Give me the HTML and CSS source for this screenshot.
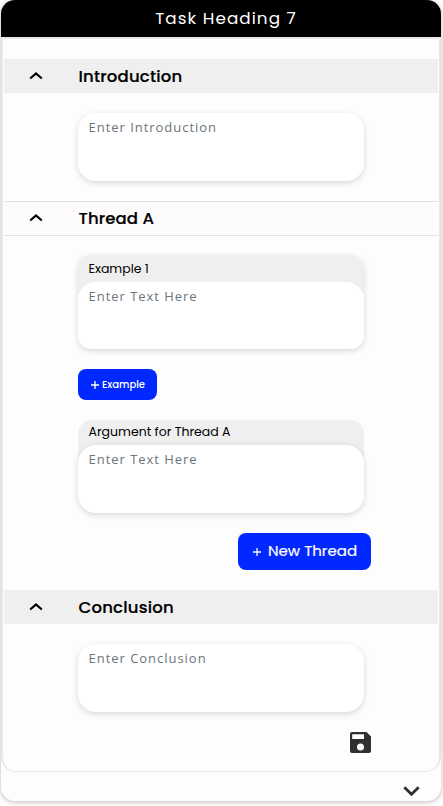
FILE: index.html
```html
<!DOCTYPE html>
<html lang="en">
<head>
<meta charset="utf-8">
<title>Task Heading 7</title>
<link rel="stylesheet" href="styles.css">
</head>
<body>
<main class="card">
  <header class="card-header"><h1 class="card-title">Task Heading 7</h1></header>
  <div class="panel">
    <div class="section-bar">
      <svg class="chevron" viewBox="0 0 14 8"><path d="M1.200 6.500 7 1.500l5.800 5"/></svg>
      <h2 class="section-title intro">Introduction</h2>
    </div>
    <div class="field"><span class="hint">Enter Introduction</span></div>
    <div class="section-bar thread">
      <svg class="chevron" viewBox="0 0 14 8"><path d="M1.200 6.500 7 1.500l5.800 5"/></svg>
      <h2 class="section-title thread-title">Thread A</h2>
    </div>
    <div class="group example">
      <div class="label">Example 1</div>
      <div class="field nested"><span class="hint">Enter Text Here</span></div>
    </div>
    <button class="btn btn-small"><svg class="plus" viewBox="0 0 8 8"><path d="M4 0v8M0 4h8"/></svg><span>Example</span></button>
    <div class="group argument">
      <div class="label">Argument for Thread A</div>
      <div class="field nested"><span class="hint">Enter Text Here</span></div>
    </div>
    <button class="btn btn-large"><svg class="plus" viewBox="0 0 8 8"><path d="M4 0v8M0 4h8"/></svg><span>New Thread</span></button>
    <div class="section-bar">
      <svg class="chevron" viewBox="0 0 14 8"><path d="M1.200 6.500 7 1.500l5.800 5"/></svg>
      <h2 class="section-title conclusion">Conclusion</h2>
    </div>
    <div class="field"><span class="hint">Enter Conclusion</span></div>
    <svg class="save" viewBox="0 0 21 21"><path fill-rule="evenodd" d="M2 0h14.500L21 4.500V19a2 2 0 0 1-2 2H2a2 2 0 0 1-2-2V2a2 2 0 0 1 2-2ZM2.200 2.300v4.600H14V2.300ZM10.500 11.600a3.500 3.500 0 1 0 0 7 3.500 3.500 0 0 0 0-7Z"/></svg>
  </div>
  <footer class="card-footer">
    <svg class="expand" viewBox="0 0 17 10"><path d="m1.300 1.300 7.200 7 7.200-7"/></svg>
  </footer>
</main>
</body>
</html>
```

FILE: styles.css
```css
* {
  box-sizing: border-box;
}

body {
  margin: 0;
  height: 806px;
  padding-left: 1px;
  overflow: hidden;
  background: #fff;
  font-family: Poppins, Inter, sans-serif;
  color: #000;
}

h1,
h2 {
  margin: 0;
}

svg {
  display: block;
  flex: none;
}

.card {
  display: flex;
  flex-direction: column;
  width: 440px;
  height: 801px;
  border-radius: 14px;
  background: #fdfdfd;
  box-shadow: 0 1px 4px 1px rgba(0, 0, 0, 0.2);
  overflow: hidden;
}

.card-header {
  flex: none;
  height: 37px;
  padding-left: 10px;
  background: #000;
  text-align: center;
}

.card-title {
  color: #fff;
  font-size: 16.800px;
  font-weight: 400;
  line-height: 37px;
  letter-spacing: 1.050px;
}

.panel {
  display: flex;
  flex: none;
  flex-direction: column;
  height: 735px;
  padding: 20px 1px 0;
  border: 1px solid #e8e8e8;
  border-width: 2px 2px 1px;
  border-radius: 0 0 15px 15px;
  background: #fdfdfd;
}

.section-bar {
  display: flex;
  flex: none;
  align-items: center;
  gap: 35.500px;
  height: 34px;
  padding-left: 25px;
  background: #efefef;
}

.section-bar.thread {
  height: 35px;
  margin-top: 20px;
  border: solid #e2e2e2;
  border-width: 1px 0;
  background: #fdfbfc;
}

.chevron {
  width: 14px;
  height: 8px;
  margin-bottom: 1px;
  fill: none;
  stroke: #000;
  stroke-width: 2.200;
}

.section-title {
  padding-top: 1px;
  font-size: 16.500px;
  font-weight: 500;
  line-height: 33px;
  white-space: nowrap;
  -webkit-text-stroke: 0.200px #000;
}

.thread-title {
  padding-top: 0;
  letter-spacing: 0.100px;
}

.intro,
.conclusion {
  letter-spacing: 0.200px;
}

.field {
  flex: none;
  width: 286px;
  height: 68px;
  margin: 20px 0 0 74px;
  padding: 5px 10.500px;
  border-radius: 18px;
  background: #fff;
  box-shadow: 0 2px 6px rgba(0, 0, 0, 0.15);
}

.hint {
  display: block;
  color: #6c757d;
  font: 13px/18px "Open Sans", sans-serif;
  letter-spacing: 0.970px;
  white-space: nowrap;
}

.group {
  flex: none;
  width: 286px;
  margin-left: 74px;
  border-radius: 14px 14px 18px 18px;
  background: linear-gradient(#efefef 39px, transparent 39px);
}

.group .field {
  margin: 0;
}

.example {
  height: 94px;
  margin-top: 19px;
  border-radius: 14px;
  box-shadow: 0 2px 6px rgba(0, 0, 0, 0.15);
}

.example .field {
  height: 67px;
  border-radius: 18px 18px 14px 14px;
  box-shadow: none;
}

.label {
  height: 27px;
  padding-left: 10.500px;
  font-size: 12.500px;
  line-height: 27px;
  white-space: nowrap;
}

.argument {
  height: 93px;
  margin-top: 20px;
}

.argument .label {
  height: 25px;
  line-height: 24px;
}

.btn {
  display: flex;
  flex: none;
  align-items: center;
  border: 0;
  border-radius: 8px;
  background: #0028ff;
  color: #fff;
  font-family: inherit;
}

.plus {
  width: 8px;
  height: 8px;
  fill: none;
  stroke: #fff;
  stroke-width: 1.300;
}

.btn-small {
  gap: 3px;
  width: 79px;
  height: 31px;
  margin: 20px 0 0 74px;
  padding: 0 0 0 13px;
  font-size: 10px;
  font-weight: 500;
}

.btn-large {
  gap: 7px;
  width: 133px;
  height: 37px;
  margin: 20px 0 20px 234px;
  padding: 0 0 2px 15px;
  font-size: 15px;
  -webkit-text-stroke: 0.200px #fff;
}

.btn-large .plus {
  margin-top: 2px;
}

.save {
  width: 21px;
  height: 21px;
  margin: 20px 0 0 346px;
  fill: #303030;
}

.card-footer {
  display: flex;
  justify-content: flex-end;
  padding: 14px 21px 0 0;
}

.expand {
  width: 17px;
  height: 10px;
  fill: none;
  stroke: #303030;
  stroke-width: 2.800;
}
```
